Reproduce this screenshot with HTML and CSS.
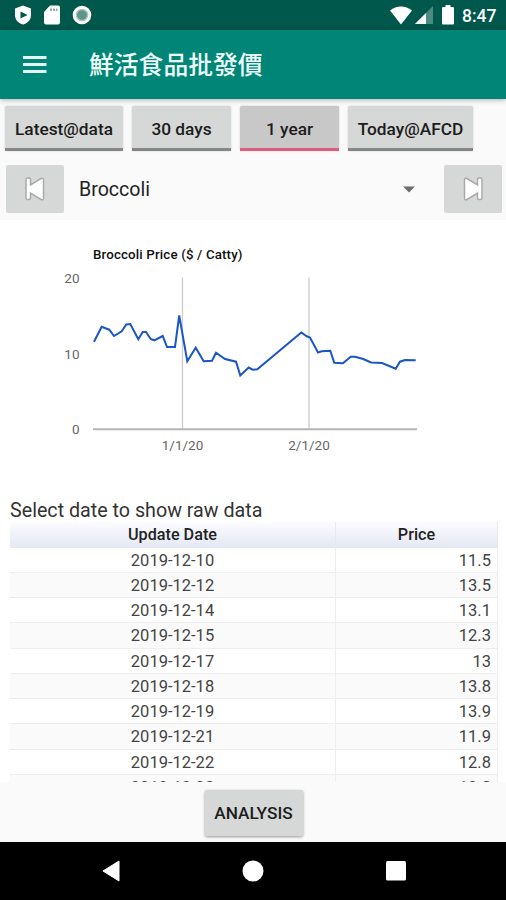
FILE: index.html
```html
<!DOCTYPE html>
<html lang="zh-Hant">
<head>
    <meta charset="UTF-8">
    <meta name="viewport" content="width=device-width, initial-scale=1.0">
    <title>鮮活食品批發價</title>
    <link rel="stylesheet" href="styles.css">
</head>
<body>
    <!-- Status bar -->
    <div class="status-bar">
        <div class="status-left">
            <svg width="18" height="20" viewBox="0 0 18 20"><path d="M9 0.5 17 3.500V10C17 15 13.500 18.300 9 19.500 4.500 18.300 1 15 1 10V3.500Z" fill="#fff"/><path d="M6.500 6.500v7l7-3.500z" fill="#00574b"/></svg>
            <svg width="16" height="20" viewBox="0 0 16 20"><path d="M6 .5h8a2 2 0 0 1 2 2V17.500a2 2 0 0 1-2 2H2a2 2 0 0 1-2-2V7z" fill="#fff"/><path d="M6 3.500h2v2.500H6zM9 3.500h2v2.500H9zM12 3.500h1.500v2.500H12z" fill="#8fb1ab"/></svg>
            <svg width="20" height="20" viewBox="0 0 20 20"><circle cx="10" cy="10" r="9.300" fill="#fff"/><circle cx="10" cy="10" r="5.600" fill="#5f9589" stroke="#a5c4be" stroke-width="1.500"/></svg>
        </div>
        <div class="status-right">
            <svg class="wifi" width="22" height="19" viewBox="0 0 22 19"><path d="M0 4.500C6.500-1 15.500-1 22 4.500L11 18.500z" fill="#fff"/></svg>
            <svg class="signal" width="18" height="18" viewBox="0 0 18 18"><path d="M18 0v18H0z" fill="#4d8a80"/><path d="M11 7v11H0z" fill="#fff"/></svg>
            <svg class="battery" width="12" height="20" viewBox="0 0 12 20"><path d="M3.500 0h5v2H11a1 1 0 0 1 1 1v15.500a1 1 0 0 1-1 1H1a1 1 0 0 1-1-1V3a1 1 0 0 1 1-1h2.500z" fill="#fff"/></svg>
            <span class="clock">8:47</span>
        </div>
    </div>

    <!-- Toolbar -->
    <header class="toolbar">
        <svg width="24" height="18" viewBox="0 0 24 18"><path d="M0 0h23.500v3H0zM0 7h23.500v3H0zM0 14h23.500v3H0z" fill="#e2f5f3"/></svg>
        <h1>鮮活食品批發價</h1>
    </header>

    <!-- Range buttons -->
    <div class="tabs">
        <button class="tab latest">Latest@data</button>
        <button class="tab">30 days</button>
        <button class="tab active">1 year</button>
        <button class="tab today">Today@AFCD</button>
    </div>

    <!-- Food picker -->
    <div class="picker">
        <button class="step">
            <svg width="22" height="26" viewBox="0 0 22 26"><path d="M2 3.500Q2 2 3.500 2H5Q6.500 2 6.500 3.500V9L17 2.500Q19.500 1.500 19.500 4V22Q19.500 24.500 17 23.500L6.500 17V22Q6.500 23.500 5 23.500H3.500Q2 23.500 2 22Z"/></svg>
        </button>
        <div class="select">
            <span>Broccoli</span>
            <svg width="12" height="7" viewBox="0 0 12 7"><path d="M0 .5h12l-6 6z" fill="#6d6d6d"/></svg>
        </div>
        <button class="step next">
            <svg width="22" height="26" viewBox="0 0 22 26"><path d="M2 3.500Q2 2 3.500 2H5Q6.500 2 6.500 3.500V9L17 2.500Q19.500 1.500 19.500 4V22Q19.500 24.500 17 23.500L6.500 17V22Q6.500 23.500 5 23.500H3.500Q2 23.500 2 22Z"/></svg>
        </button>
    </div>

    <!-- Chart and raw data -->
    <main class="content">
        <svg class="chart" width="506" height="278" viewBox="0 0 506 278">
            <text class="chart-title" x="93" y="38.500" textLength="149.500">Broccoli Price ($ / Catty)</text>
            <path d="M182.500 57.500V209M309 57.500V209" stroke="#ccc" stroke-width="1.300"/>
            <path d="M93 209.300H417" stroke="#b5b5b5" stroke-width="2"/>
            <g class="axis">
                <text x="79.500" y="63" text-anchor="end">20</text>
                <text x="79.500" y="138.500" text-anchor="end">10</text>
                <text x="79.500" y="214" text-anchor="end">0</text>
                <text x="182.500" y="230" text-anchor="middle" textLength="41.500">1/1/20</text>
                <text x="309" y="230" text-anchor="middle" textLength="41.500">2/1/20</text>
            </g>
            <polyline class="line" points="94,121.700 101.700,106.800 109.300,109.700 114,116 121.700,111.300 126.300,104.500 130.300,104 138.300,119.300 142.700,112 146,112 150.700,119 154.300,120.300 162.700,116 167,127 175,127 179.200,95.500 187.300,141.300 195.700,127.700 203.700,141.300 212,140.700 216,132.800 225,139 236,141.700 240.300,155.500 248.700,147.500 252.700,149.700 257.300,149.300 301.300,112.500 306.700,116.300 310,117.500 318,132.500 321.700,131.300 330.300,130.700 334.300,142.700 343,143.300 350.700,136.700 355,136.700 363.300,139 371,142.500 382,143 395.700,148.700 400,141.700 405,140 415.700,140.300"/>
        </svg>
        <p class="hint">Select date to show raw data</p>
        <table>
            <thead>
                <tr><th class="date">Update Date</th><th>Price</th></tr>
            </thead>
            <tbody>
                <tr><td>2019-12-10</td><td>11.5</td></tr>
                <tr><td>2019-12-12</td><td>13.5</td></tr>
                <tr><td>2019-12-14</td><td>13.1</td></tr>
                <tr><td>2019-12-15</td><td>12.3</td></tr>
                <tr><td>2019-12-17</td><td>13</td></tr>
                <tr><td>2019-12-18</td><td>13.8</td></tr>
                <tr><td>2019-12-19</td><td>13.9</td></tr>
                <tr><td>2019-12-21</td><td>11.9</td></tr>
                <tr><td>2019-12-22</td><td>12.8</td></tr>
                <tr><td>2019-12-23</td><td>12.8</td></tr>
            </tbody>
        </table>
    </main>

    <div class="actions">
        <button class="analysis">ANALYSIS</button>
    </div>

    <!-- Navigation bar -->
    <nav>
        <svg width="18" height="22" viewBox="0 0 18 22"><path d="M17 1v20L1 11z" fill="#fff" stroke="#fff" stroke-linejoin="round"/></svg>
        <svg width="22" height="22" viewBox="0 0 22 22"><circle cx="11" cy="11" r="10.500" fill="#fff"/></svg>
        <svg width="20" height="20" viewBox="0 0 20 20"><rect width="20" height="19.500" rx="1.500" fill="#fff"/></svg>
    </nav>
</body>
</html>
```
FILE: styles.css
```css
* {
    box-sizing: border-box;
}

body {
    font-family: Roboto, "Noto Sans CJK TC", sans-serif;
    margin: 0;
    height: 900px;
    display: flex;
    flex-direction: column;
    overflow: hidden;
    background-color: #fafafa;
    color: #222;
}

svg {
    display: block;
    flex: none;
}

button {
    font-family: inherit;
    border: none;
    padding: 0;
    background-color: #d6d7d7;
    color: #1c1c1c;
}

/* Status bar */
.status-bar {
    flex: none;
    height: 30px;
    padding: 0 9px 0 14px;
    display: flex;
    justify-content: space-between;
    align-items: center;
    background-color: #00574b;
    color: #fff;
}

.status-left,
.status-right {
    display: flex;
    align-items: center;
}

.status-left {
    gap: 12px;
}

.signal {
    margin-left: 3px;
}

.battery {
    margin: 0 8px 0 9px;
}

.clock {
    width: 35px;
    font-size: 17.5px;
    font-weight: 500;
    line-height: 30px;
    padding-top: 2px;
    white-space: nowrap;
}

/* Toolbar */
.toolbar {
    flex: none;
    height: 69px;
    padding-left: 23px;
    display: flex;
    align-items: center;
    gap: 42px;
    background-color: #008577;
    box-shadow: 0 1px 5px rgba(0, 0, 0, 0.3);
    color: #effffc;
}

.toolbar h1 {
    margin: 0;
    padding-top: 2px;
    font-size: 24.8px;
    font-weight: 500;
    line-height: 36px;
}

/* Range buttons */
.tabs {
    flex: none;
    height: 62px;
    padding: 7px 5px 0;
    display: flex;
    gap: 9px;
}

.tab {
    width: 99px;
    height: 45px;
    padding-top: 3px;
    border-bottom: 3px solid #858686;
    border-radius: 2px 2px 0 0;
    font-size: 17.3px;
    font-weight: 500;
    box-shadow: 0 0 2px rgba(0, 0, 0, 0.2);
}

.tab.latest {
    width: 118px;
}

.tab.today {
    width: 125px;
}

.tab.active {
    background-color: #c8c8c8;
    border-bottom-color: #d95f80;
}

/* Food picker */
.picker {
    flex: none;
    height: 59px;
    padding: 4px 4px 7px 6px;
    display: flex;
}

.step {
    width: 58px;
    height: 48px;
    border-radius: 2px;
    display: flex;
    align-items: center;
    justify-content: center;
}

.step path {
    fill: #fff;
    stroke: #aaa;
    stroke-width: 1.5;
}

.step.next svg {
    transform: scaleX(-1);
}

.select {
    flex: 1;
    padding: 0 29px 0 15px;
    display: flex;
    align-items: center;
    justify-content: space-between;
    font-size: 19.6px;
}

/* Chart and raw data */
.content {
    flex: none;
    height: 562px;
    overflow: hidden;
    background-color: #fff;
}

.chart-title {
    font-size: 13.3px;
    font-weight: 500;
    fill: #111;
}

.axis {
    font-size: 13.5px;
    fill: #666;
}

.line {
    fill: none;
    stroke: #1a56c4;
    stroke-width: 2;
}

.hint {
    margin: 0 10px;
    padding-top: 2px;
    font-size: 19.7px;
    line-height: 22px;
    color: #333;
}

table {
    width: 488px;
    margin-left: 10px;
    table-layout: fixed;
    border-collapse: separate;
    border-spacing: 0;
    font-size: 16.5px;
}

th {
    height: 25.5px;
    padding: 0;
    font-size: 16.2px;
    font-weight: 500;
    background: linear-gradient(#fcfcff, #e4e8f4);
    border-right: 1px solid #e8e8ee;
}

.date {
    width: 326px;
}

td {
    height: 25.25px;
    padding: 2px 6px 0 0;
    line-height: 22px;
    text-align: right;
    border-right: 1px solid #eee;
    border-bottom: 1px solid #eee;
    color: #444;
}

td:first-child {
    padding-right: 0;
    text-align: center;
}

tbody tr:nth-child(even) {
    background-color: #fafafa;
}

/* Bottom button */
.actions {
    flex: none;
    height: 60px;
    padding: 8px 0 0 1px;
    display: flex;
    justify-content: center;
}

.analysis {
    width: 98px;
    height: 46px;
    border-radius: 2px;
    font-size: 17.2px;
    font-weight: 500;
    box-shadow: 0 1px 3px rgba(0, 0, 0, 0.4);
}

/* Navigation bar */
nav {
    flex: none;
    height: 58px;
    padding: 0 100px 0 102px;
    display: flex;
    align-items: center;
    justify-content: space-between;
    background-color: #000;
}
```
